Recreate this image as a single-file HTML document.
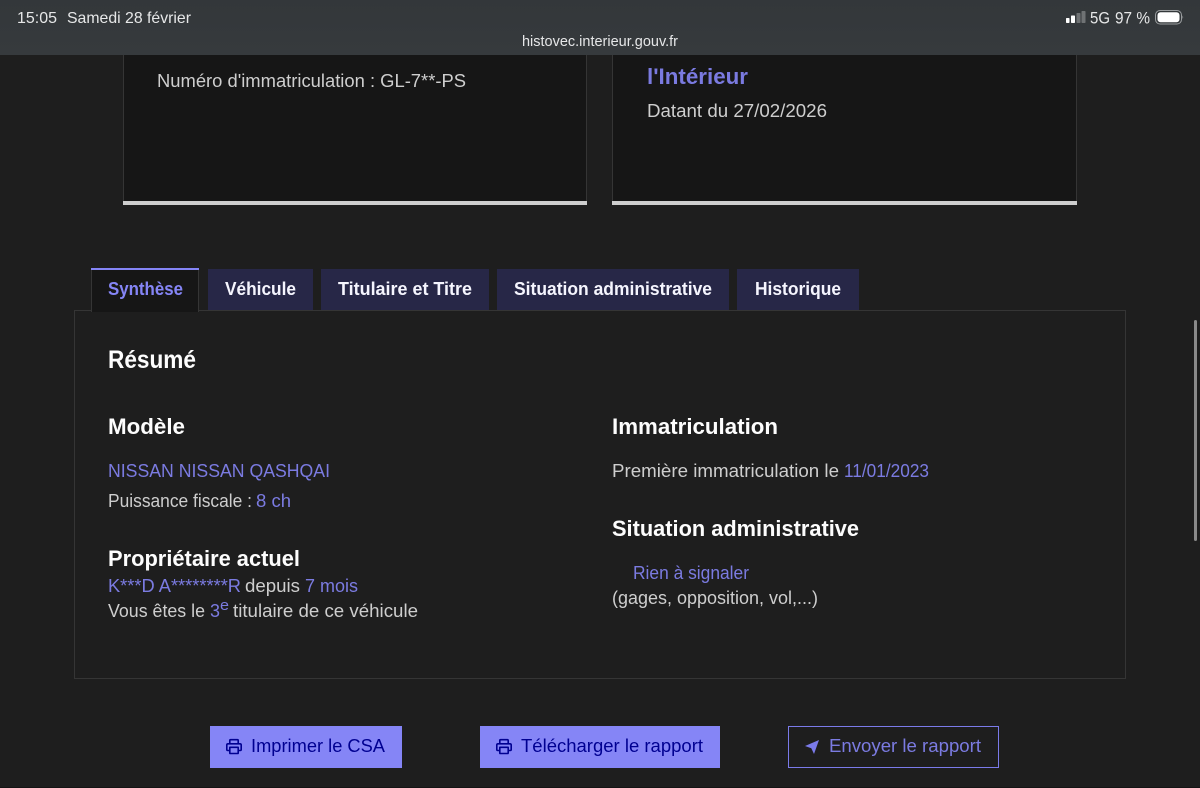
<!DOCTYPE html>
<html lang="fr"><head><meta charset="utf-8"><title>HistoVec</title>
<style>
html,body{margin:0;padding:0;width:1200px;height:788px;overflow:hidden;background:#1e1e1e}
svg{display:block;position:absolute;left:0;top:0}
text{font-family:"Liberation Sans",sans-serif;white-space:pre}
.t{font-size:18px;fill:#cecece}
.b{font-size:18px;fill:#8585f6;fill-opacity:.9}
.h{font-weight:700;font-size:22px;fill:#fdfdfd}
.tab{font-weight:700;font-size:18px;fill:#f5f5fe}
.st{font-size:16px;fill:#e6e7e8}
.bt{font-size:18px;fill:#000091}
</style></head><body>
<svg width="1200" height="788" viewBox="0 0 1200 788" xmlns="http://www.w3.org/2000/svg">
<defs><linearGradient id="g" x1="0" y1="0" x2="0" y2="1"><stop offset="0" stop-color="#33373a"/><stop offset="1" stop-color="#363a3d"/></linearGradient></defs>
<rect width="1200" height="788" fill="#1e1e1e"/>
<!-- cards -->
<rect x="123" y="55" width="464" height="147" fill="#161616"/>
<rect x="612" y="55" width="465" height="147" fill="#161616"/>
<path d="M123.500 55V201M586.500 55V201M612.500 55V201M1076.500 55V201" stroke="#353535" fill="none"/>
<rect x="123" y="201" width="464" height="4" fill="#cecece"/>
<rect x="612" y="201" width="465" height="4" fill="#cecece"/>
<!-- status -->
<rect width="1200" height="55" fill="url(#g)"/>
<text class="st" x="17" y="23" textLength="40" lengthAdjust="spacingAndGlyphs">15:05</text>
<text class="st" x="67" y="23" textLength="124" lengthAdjust="spacingAndGlyphs">Samedi 28 février</text>
<text class="st" style="font-size:15px" x="522" y="46" textLength="156" lengthAdjust="spacingAndGlyphs">histovec.interieur.gouv.fr</text>
<rect x="1066" y="18" width="3.500" height="5" rx=".7" fill="#fff"/>
<rect x="1071" y="15.500" width="4" height="7.500" rx=".7" fill="#fff"/>
<rect x="1076.500" y="13" width="4" height="10" rx=".7" fill="#6f7274"/>
<rect x="1081.500" y="11" width="4" height="12" rx=".7" fill="#6f7274"/>
<text class="st" style="font-size:17px" x="1090" y="23.500" textLength="20" lengthAdjust="spacingAndGlyphs">5G</text>
<text class="st" style="font-size:17px" x="1115" y="23.500" textLength="35" lengthAdjust="spacingAndGlyphs">97 %</text>
<rect x="1155.500" y="10.500" width="26" height="13.500" rx="4.500" fill="none" stroke="#9a9d9f"/>
<rect x="1157.500" y="12.200" width="22" height="10" rx="3" fill="#fff"/>
<path d="M1182.500 15.500q1.300 1.700 0 3.400z" fill="#9a9d9f"/>
<!-- card text -->
<text class="t" x="157" y="87" textLength="309" lengthAdjust="spacingAndGlyphs">Numéro d'immatriculation : GL-7**-PS</text>
<text class="b" style="font-size:22px;font-weight:700" x="647" y="84" textLength="101" lengthAdjust="spacingAndGlyphs">l'Intérieur</text>
<text class="t" x="647" y="117" textLength="180" lengthAdjust="spacingAndGlyphs">Datant du 27/02/2026</text>
<!-- panel -->
<rect x="74.500" y="310.500" width="1051" height="368" fill="none" stroke="#353535"/>
<!-- tabs -->
<rect x="91" y="268" width="108" height="44" fill="#161616"/>
<path d="M91.500 270V312M198.500 270V312" stroke="#353535"/>
<rect x="91" y="268" width="108" height="2" fill="#8585f6"/>
<rect x="208" y="269" width="105" height="41" fill="#272747"/>
<rect x="321" y="269" width="168" height="41" fill="#272747"/>
<rect x="497" y="269" width="232" height="41" fill="#272747"/>
<rect x="737" y="269" width="122" height="41" fill="#272747"/>
<text class="tab" style="fill:#8585f6" x="108" y="295" textLength="75" lengthAdjust="spacingAndGlyphs">Synthèse</text>
<text class="tab" x="225" y="295" textLength="71" lengthAdjust="spacingAndGlyphs">Véhicule</text>
<text class="tab" x="338" y="295" textLength="134" lengthAdjust="spacingAndGlyphs">Titulaire et Titre</text>
<text class="tab" x="514" y="295" textLength="198" lengthAdjust="spacingAndGlyphs">Situation administrative</text>
<text class="tab" x="755" y="295" textLength="86" lengthAdjust="spacingAndGlyphs">Historique</text>
<!-- content -->
<text class="h" style="font-size:25px" x="108" y="368" textLength="88" lengthAdjust="spacingAndGlyphs">Résumé</text>
<text class="h" x="108" y="434" textLength="77" lengthAdjust="spacingAndGlyphs">Modèle</text>
<text class="b" x="108" y="477" textLength="222" lengthAdjust="spacingAndGlyphs">NISSAN NISSAN QASHQAI</text>
<text class="t" x="108" y="507" textLength="144" lengthAdjust="spacingAndGlyphs">Puissance fiscale :</text>
<text class="b" x="256" y="507" textLength="35" lengthAdjust="spacingAndGlyphs">8 ch</text>
<text class="h" x="108" y="566" textLength="192" lengthAdjust="spacingAndGlyphs">Propriétaire actuel</text>
<text class="b" x="108" y="592" textLength="133" lengthAdjust="spacingAndGlyphs">K***D A********R</text>
<text class="t" x="245" y="592" textLength="55" lengthAdjust="spacingAndGlyphs">depuis</text>
<text class="b" x="305" y="592" textLength="53" lengthAdjust="spacingAndGlyphs">7 mois</text>
<text class="t" x="108" y="617" textLength="97" lengthAdjust="spacingAndGlyphs">Vous êtes le</text>
<text class="b" x="210" y="617" textLength="10" lengthAdjust="spacingAndGlyphs">3</text>
<text class="b" style="font-size:15px" x="220" y="610" textLength="9" lengthAdjust="spacingAndGlyphs">e</text>
<text class="t" x="233" y="617" textLength="185" lengthAdjust="spacingAndGlyphs">titulaire de ce véhicule</text>
<text class="h" x="612" y="434" textLength="166" lengthAdjust="spacingAndGlyphs">Immatriculation</text>
<text class="t" x="612" y="477" textLength="227" lengthAdjust="spacingAndGlyphs">Première immatriculation le</text>
<text class="b" x="844" y="477" textLength="85" lengthAdjust="spacingAndGlyphs">11/01/2023</text>
<text class="h" x="612" y="536" textLength="247" lengthAdjust="spacingAndGlyphs">Situation administrative</text>
<text class="b" x="633" y="579" textLength="116" lengthAdjust="spacingAndGlyphs">Rien à signaler</text>
<text class="t" x="612" y="604" textLength="206" lengthAdjust="spacingAndGlyphs">(gages, opposition, vol,...)</text>
<!-- buttons -->
<rect x="210" y="726" width="192" height="42" fill="#8585f6"/>
<rect x="480" y="726" width="240" height="42" fill="#8585f6"/>
<rect x="788.500" y="726.500" width="210" height="41" fill="none" stroke="#7b7bea"/>
<g fill="none" stroke="#000091" stroke-width="1.600" stroke-linejoin="round">
<path d="M229.800 744v-3.500q0-.8.800-.8h6.800q.8 0 .8.800v3.500"/>
<path d="M229.800 750.500h-2q-1 0-1-1v-4.500q0-1.200 1.200-1.200h12q1.200 0 1.200 1.200v4.500q0 1-1 1h-2"/>
<path d="M229.800 747.300h8.400v5.700q0 .5-.5.500h-7.400q-.5 0-.5-.5z"/>
</g>
<g fill="none" stroke="#000091" stroke-width="1.600" stroke-linejoin="round">
<path d="M499.800 744v-3.500q0-.8.800-.8h6.800q.8 0 .8.800v3.500"/>
<path d="M499.800 750.500h-2q-1 0-1-1v-4.500q0-1.200 1.200-1.200h12q1.200 0 1.200 1.200v4.500q0 1-1 1h-2"/>
<path d="M499.800 747.300h8.400v5.700q0 .5-.5.500h-7.400q-.5 0-.5-.5z"/>
</g>
<text class="bt" x="251" y="752" textLength="134" lengthAdjust="spacingAndGlyphs">Imprimer le CSA</text>
<text class="bt" x="521" y="752" textLength="182" lengthAdjust="spacingAndGlyphs">Télécharger le rapport</text>
<path d="M805 746L819 740L814 754L811.300 748.200Z" fill="#7b7bea"/>
<text class="b" x="829" y="752" textLength="152" lengthAdjust="spacingAndGlyphs">Envoyer le rapport</text>
<!-- scrollbar -->
<rect x="1194" y="320" width="3" height="221" rx="1.500" fill="#8a8a8a"/>
<rect y="787" width="1200" height="1" fill="#141414"/>
</svg>
</body></html>
